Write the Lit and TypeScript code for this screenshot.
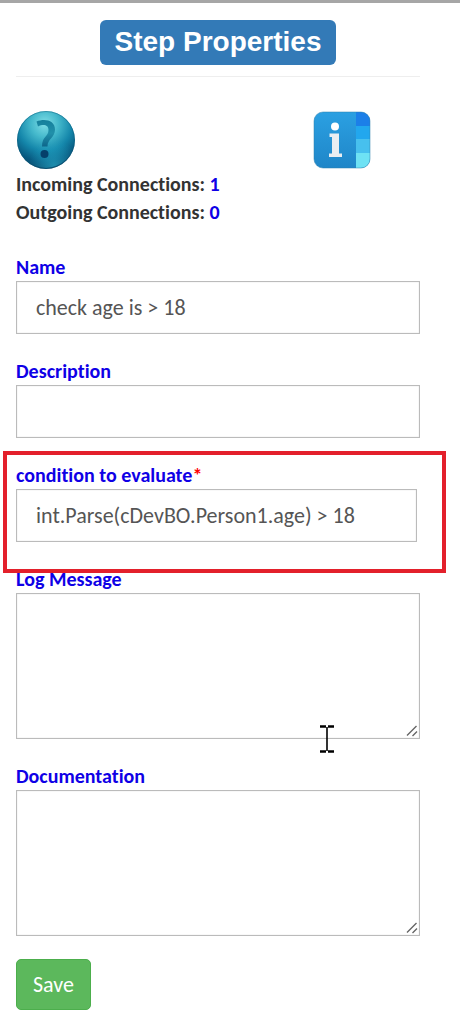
import { LitElement, html, css, svg } from "lit";
import { customElement } from "lit/decorators.js";

const helpIcon = svg`
  <svg class="icon" viewBox="0 0 60 60" aria-hidden="true">
    <defs>
      <radialGradient id="ball" cx="0.48" cy="0.22" r="0.78">
        <stop offset="0" stop-color="#7fdde6" />
        <stop offset="0.3" stop-color="#45b9cc" />
        <stop offset="0.6" stop-color="#1486aa" />
        <stop offset="0.85" stop-color="#07587f" />
        <stop offset="1" stop-color="#0a4a6c" />
      </radialGradient>
      <radialGradient id="glow" cx="0.64" cy="0.95" r="0.45">
        <stop offset="0" stop-color="#2bb4d2" stop-opacity="0.6" />
        <stop offset="1" stop-color="#2bb4d2" stop-opacity="0" />
      </radialGradient>
      <linearGradient id="mark" x1="0" y1="0" x2="0" y2="1">
        <stop offset="0" stop-color="#157f9b" />
        <stop offset="0.5" stop-color="#2190aa" />
        <stop offset="1" stop-color="#0d668b" />
      </linearGradient>
    </defs>
    <circle cx="30" cy="30" r="29" fill="url(#ball)" />
    <circle cx="30" cy="30" r="28" fill="url(#glow)" />
    <circle cx="30" cy="30" r="28.5" fill="none" stroke="#0b5673" stroke-opacity="0.4" />
    <path
      d="M20.5 11.5C29 8 39 10.500 39 19.500C39 28 31.500 28.500 31.500 36.500H26C26 26.500 32.500 26.500 32.500 20C32.500 14.500 27 14 22 16.500Z"
      fill="url(#mark)"
    />
    <circle cx="28.500" cy="44" r="4" fill="#05406a" />
  </svg>`;

const infoIcon = svg`
  <svg class="icon" viewBox="0 0 60 60" aria-hidden="true">
    <defs>
      <linearGradient id="tile" x1="0" y1="0" x2="0" y2="1">
        <stop offset="0" stop-color="#2ba0e2" />
        <stop offset="1" stop-color="#1f86c8" />
      </linearGradient>
      <clipPath id="round"><rect x="2" y="2" width="56" height="56" rx="9" /></clipPath>
    </defs>
    <g clip-path="url(#round)">
      <rect x="2" y="2" width="56" height="56" fill="url(#tile)" />
      <rect x="44" y="2" width="14" height="14" fill="#1c7fe8" />
      <rect x="44" y="16" width="14" height="13" fill="#22a7ee" />
      <rect x="44" y="29" width="14" height="14" fill="#47c0ee" />
      <rect x="44" y="43" width="14" height="15" fill="#6ee2f4" />
    </g>
    <rect x="2" y="2" width="56" height="56" rx="9" fill="none" stroke="#2b7fae" stroke-opacity="0.5" />
    <circle cx="23" cy="16.500" r="4" fill="#fff" />
    <path d="M17.500 23.500H27V43.500H30V47H17V43.500H20V27H17.500Z" fill="#e9eef2" />
  </svg>`;

@customElement("app-root")
export class AppRoot extends LitElement {
  static styles = css`
    :host {
      display: block;
      position: relative;
      box-sizing: border-box;
      border-top: 3px solid #a6a6a6;
      padding: 17px 40px 14px 16px;
      background: #fff;
      color: #333;
      font-family: Carlito, Calibri, Lato, sans-serif;
      font-variant-ligatures: none;
    }
    * {
      box-sizing: border-box;
    }
    .header {
      display: flex;
      justify-content: center;
      padding-bottom: 11px;
      border-bottom: 1px solid #eee;
    }
    .title {
      margin: 0;
      padding: 0 15px 2px;
      border-radius: 6px;
      background: #337ab7;
      color: #fff;
      font: bold 28px/43px "Liberation Sans", Arial, sans-serif;
    }
    .tools {
      display: grid;
      grid-template-columns: 296px 1fr;
      margin-top: 33px;
    }
    .tool {
      justify-self: start;
      padding: 0;
      border: 0;
      background: none;
      line-height: 0;
    }
    .icon {
      width: 60px;
      height: 60px;
    }
    .connections {
      margin: 0 0 27px;
      font-size: 20px;
      font-weight: bold;
      line-height: 28px;
    }
    .connections p {
      margin: 0;
    }
    .count,
    .label {
      color: #0f00e6;
    }
    .field {
      position: relative;
      margin-bottom: 23px;
    }
    .label {
      display: block;
      font-size: 20px;
      font-weight: bold;
      line-height: 28px;
    }
    .required {
      color: #f00;
    }
    .control {
      display: block;
      width: 100%;
      margin: 0;
      border: 1px solid #bbb;
      border-radius: 0;
      outline: 0;
      background: #fff;
      box-shadow: inset 0 0 1px #bbb;
      color: #555;
      font: 22px/30px Carlito, Calibri, Lato, sans-serif;
      font-variant-ligatures: none;
    }
    .line {
      height: 53px;
      padding: 0 19px;
    }
    .area {
      height: 146px;
      padding: 10px 19px;
      resize: none;
    }
    .narrow {
      width: calc(100% - 3px);
    }
    .grip {
      position: absolute;
      right: 2px;
      bottom: 2px;
      width: 12px;
      height: 12px;
      pointer-events: none;
    }
    .marker {
      position: absolute;
      z-index: 1;
      inset: -10px -26px -31px -13px;
      border: 4px solid #e3202b;
      pointer-events: none;
    }
    .caret {
      position: absolute;
      right: 85px;
      bottom: -14px;
      width: 16px;
      height: 28px;
      pointer-events: none;
    }
    .save {
      display: block;
      padding: 0 16px;
      border: 1px solid #4cae4c;
      border-radius: 5px;
      background: #5cb85c;
      color: #fff;
      font: 22px/49px Carlito, Calibri, Lato, sans-serif;
    }
  `;

  private grip() {
    return html`<svg class="grip" viewBox="0 0 12 12" aria-hidden="true">
      <path d="M1 10.5 10.5 1M6.5 11 11 6.5" stroke="#666" stroke-width="1.4" fill="none" />
    </svg>`;
  }

  render() {
    return html`
      <header class="header"><h1 class="title">Step Properties</h1></header>
      <div class="tools">
        <button class="tool" type="button" aria-label="Help">${helpIcon}</button>
        <button class="tool" type="button" aria-label="Information">${infoIcon}</button>
      </div>
      <div class="connections">
        <p>Incoming Connections: <span class="count">1</span></p>
        <p>Outgoing Connections: <span class="count">0</span></p>
      </div>
      <form @submit=${(e: Event) => e.preventDefault()}>
        <div class="field">
          <label class="label" for="name">Name</label>
          <input class="control line" id="name" type="text" value="check age is > 18" />
        </div>
        <div class="field">
          <label class="label" for="description">Description</label>
          <input class="control line" id="description" type="text" />
        </div>
        <div class="field">
          <label class="label" for="condition">condition to evaluate<span class="required">*</span></label>
          <input
            class="control line narrow"
            id="condition"
            type="text"
            required
            value="int.Parse(cDevBO.Person1.age) > 18"
          />
          <div class="marker"></div>
        </div>
        <div class="field">
          <label class="label" for="log">Log Message</label>
          <textarea class="control area" id="log"></textarea>
          ${this.grip()}
          <svg class="caret" viewBox="0 0 16 28" aria-hidden="true">
            <path d="M1 1.5H7M9 1.5H15M1 26.5H7M9 26.5H15" stroke="#000" stroke-width="2.4" />
            <path d="M8 2V26" stroke="#000" stroke-width="1.6" />
          </svg>
        </div>
        <div class="field">
          <label class="label" for="docs">Documentation</label>
          <textarea class="control area" id="docs"></textarea>
          ${this.grip()}
        </div>
        <button class="save" type="submit">Save</button>
      </form>
    `;
  }
}
